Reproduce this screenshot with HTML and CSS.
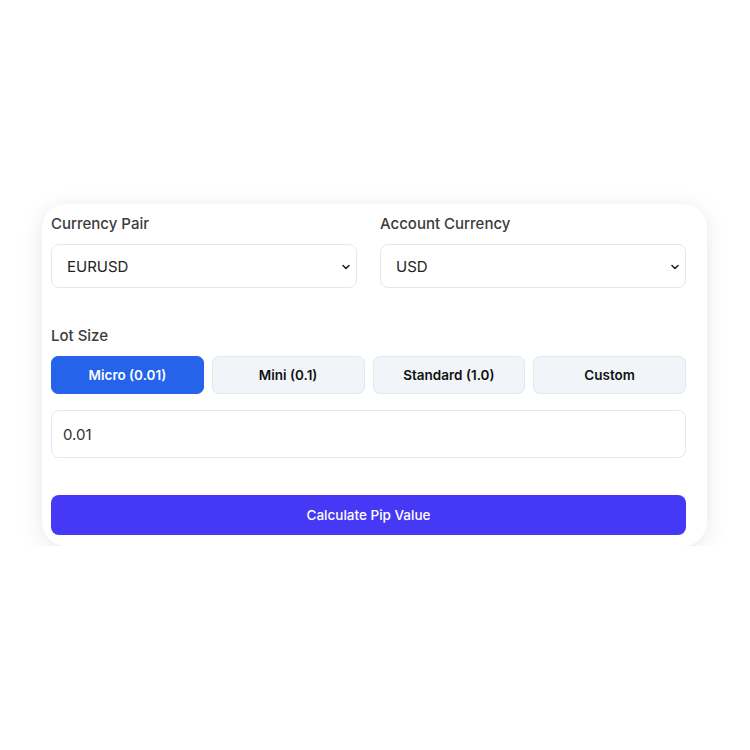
FILE: index.html
```html
<!DOCTYPE html>
<html>
<head>
<meta charset="utf-8">
<link rel="stylesheet" href="styles.css">
</head>
<body>
<div class="page">
  <div class="card">
    <div class="row">
      <div class="field">
        <label class="label">Currency Pair</label>
        <div class="select">
          <span>EURUSD</span>
          <svg class="chev" width="10" height="10" viewBox="0 0 10 10"><path d="M2 3.5 L5 6.5 L8 3.5" fill="none" stroke="#222" stroke-width="1.6" stroke-linecap="round" stroke-linejoin="round"/></svg>
        </div>
      </div>
      <div class="field">
        <label class="label">Account Currency</label>
        <div class="select">
          <span>USD</span>
          <svg class="chev" width="10" height="10" viewBox="0 0 10 10"><path d="M2 3.5 L5 6.5 L8 3.5" fill="none" stroke="#222" stroke-width="1.6" stroke-linecap="round" stroke-linejoin="round"/></svg>
        </div>
      </div>
    </div>
    <label class="label lot-label">Lot Size</label>
    <div class="lots">
      <button class="lot active">Micro (0.01)</button>
      <button class="lot">Mini (0.1)</button>
      <button class="lot">Standard (1.0)</button>
      <button class="lot">Custom</button>
    </div>
    <div class="input">0.01</div>
    <button class="calc">Calculate Pip Value</button>
  </div>
</div>
</body>
</html>
```
FILE: styles.css
```css
* { box-sizing: border-box; }
html, body { margin: 0; padding: 0; background: #ffffff; }
body { font-family: Inter, "Noto Sans", sans-serif; }
.page { padding: 204px 0 0 42px; }
.card {
  width: 665px;
  background: #fff;
  border-radius: 24px;
  padding: 9px 21px 11px 9px;
  box-shadow: 0 6px 28px rgba(0, 0, 0, 0.07), 0 0 14px rgba(0, 0, 0, 0.035);
}
.row { display: flex; gap: 23px; }
.field { flex: 1; display: flex; flex-direction: column; }
.label {
  display: block;
  font-size: 15px;
  line-height: 22px;
  font-weight: 500;
  color: #3b3b3b;
  margin-bottom: 9px;
}
.select {
  height: 44px;
  border: 1px solid #e2e8f0;
  border-radius: 8px;
  display: flex;
  align-items: center;
  justify-content: space-between;
  padding: 0 5px 0 15px;
  font-size: 15px;
  color: #222;
}
.chev { margin-top: 1px; }
.lot-label { margin-top: 37px; margin-bottom: 9px; }
.lots { display: flex; gap: 8px; }
.lot {
  flex: 1;
  height: 38px;
  border: 1px solid #e2e8f0;
  background: #f1f5f9;
  border-radius: 7px;
  font-family: inherit;
  font-size: 13.5px;
  font-weight: 600;
  color: #111;
  padding: 0;
}
.lot.active { background: #2563eb; border-color: #2563eb; color: #fff; }
.input {
  margin-top: 16px;
  height: 48px;
  border: 1px solid #e2e8f0;
  border-radius: 8px;
  display: flex;
  align-items: center;
  padding: 0 11px;
  font-size: 15px;
  color: #333;
}
.calc {
  display: block;
  width: 100%;
  margin-top: 37px;
  height: 40px;
  border: none;
  border-radius: 8px;
  background: #4639f5;
  color: #fff;
  font-family: inherit;
  font-size: 13.5px;
  font-weight: 500;
}
```
